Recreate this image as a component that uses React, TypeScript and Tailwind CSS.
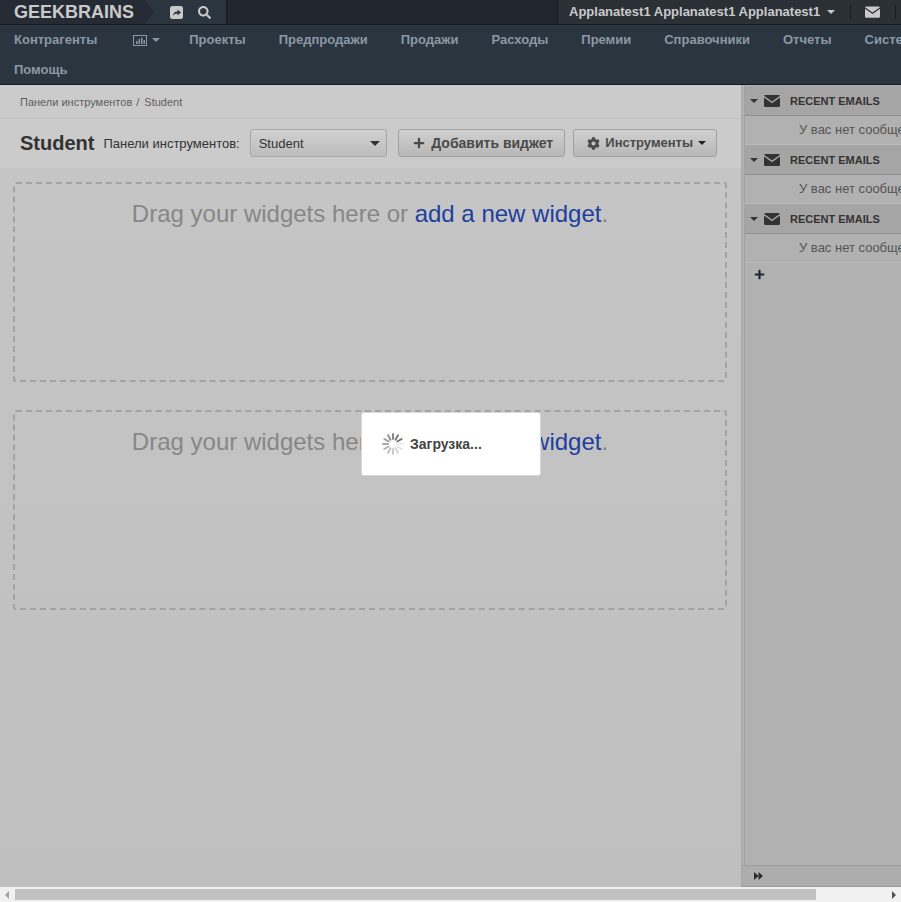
import { FaCog, FaPlus, FaSearch } from 'react-icons/fa';

const navItems = ['Проекты', 'Предпродажи', 'Продажи', 'Расходы', 'Премии', 'Справочники', 'Отчеты', 'Система'];

const Caret = ({ className }: { className: string }) => (
  <span className={`inline-block w-0 h-0 border-x-[4px] border-x-transparent border-t-[4px] ${className}`} />
);

const MailGlyph = ({ className }: { className: string }) => (
  <svg viewBox="0 0 16 12" className={className} fill="currentColor">
    <path d="M1.2 0h13.6c.5 0 1 .3 1.2.8L8 6.6 0 .8C.2.3.7 0 1.2 0z" />
    <path d="M0 2.4v8.4c0 .7.5 1.2 1.2 1.2h13.6c.7 0 1.2-.5 1.2-1.2V2.4L8 8.2z" />
  </svg>
);

const ShareGlyph = () => (
  <svg viewBox="0 0 13 13" className="w-[13px] h-[13px]">
    <rect width="13" height="13" rx="2.5" fill="#c9c9c9" />
    <path d="M3 10c0-3 1.600-4.500 4.500-4.500V3.500L11 6.500 7.500 9.500V7.500C5.500 7.500 4 8.200 3 10z" fill="#2b3540" />
  </svg>
);

const ChartGlyph = () => (
  <svg viewBox="0 0 14 11" className="w-[14px] h-[11px]">
    <rect x="0.500" y="0.500" width="13" height="10" fill="none" stroke="#8b98a3" />
    <path d="M3 6h1.500v3H3zM5.500 4H7v5H5.500zM8 2.500h1.500V9H8zM10.500 5H12v4h-1.500z" fill="#8b98a3" />
  </svg>
);

const FastForwardGlyph = () => (
  <svg viewBox="0 0 9 8" className="w-[9px] h-[8px] text-[#2a2a2a]" fill="currentColor">
    <path d="M0 0l4.500 4L0 8zM4.500 0L9 4 4.500 8z" />
  </svg>
);

const DropZone = () => (
  <div className="h-[200px] border-2 border-dashed border-[#a3a3a3] rounded-[3px] text-center pt-[14px] text-[24px] leading-[32px] text-[#878787]">
    Drag your widgets here or <span className="text-[#1f3e9e]">add a new widget</span>.
  </div>
);

const EmailDashlet = () => (
  <div>
    <div className="h-[30px] bg-[#a5a5a5] border-b border-[#8f8f8f] flex items-center pl-[5px] pt-[1px] text-[#333]">
      <Caret className="border-t-[#333] mr-[6px]" />
      <MailGlyph className="w-4 h-3 mr-[10px]" />
      <span className="text-[11px] font-bold whitespace-nowrap">RECENT EMAILS</span>
    </div>
    <div className="h-[29px] bg-[#b1b1b1] border-b border-[#bcbcbc] pl-[54px] text-[13px] leading-[28px] text-[#555] whitespace-nowrap">
      У вас нет сообщений
    </div>
  </div>
);

export default function App() {
  return (
    <div className="w-[901px] h-[902px] overflow-hidden relative flex flex-col font-['Liberation_Sans',sans-serif] bg-[#f1f1f1]">
      <div className="h-[25px] shrink-0 flex bg-[#22262f] border-b border-[#181c22]">
        <div className="relative w-[145px] bg-[#252b34] pl-[14px] text-[18px] leading-[24px] font-bold text-[#c9c9c9]">
          GEEKBRAINS
          <span className="absolute z-10 left-[145px] top-0 w-0 h-0 border-y-[12px] border-y-transparent border-l-[9px] border-l-[#252b34]" />
        </div>
        <div className="w-[82px] bg-[#2b3540] border-r border-[#181c22] flex items-center pl-[25px] gap-[15px] text-[#c9c9c9]">
          <ShareGlyph />
          <FaSearch className="w-[13px] h-[13px]" />
        </div>
        <div className="flex-1" />
        <div className="w-[344px] border-l border-[#181c22] bg-[#2b3037] flex items-center pl-[11px] text-[13px] font-bold text-[#c9c9c9] whitespace-nowrap">
          Applanatest1 Applanatest1 Applanatest1
          <Caret className="border-t-[#c9c9c9] ml-[7px]" />
          <span className="h-[14px] border-l border-[#181c22] ml-[15px]" />
          <MailGlyph className="w-[15px] h-[12px] ml-[14px] shrink-0" />
          <span className="h-[14px] border-l border-[#181c22] ml-[15px]" />
        </div>
      </div>

      <div className="h-[60px] shrink-0 bg-[#2b3540] border-b border-[#14181d] text-[13px] font-bold text-[#8b98a3] whitespace-nowrap overflow-hidden">
        <div className="h-[30px] flex items-center pl-[14px]">
          <span>Контрагенты</span>
          <span className="flex items-center ml-[36px] mr-[29px]">
            <ChartGlyph />
            <Caret className="border-t-[#8b98a3] ml-[5px] border-x-[3px] border-t-[3px]" />
          </span>
          <div className="flex gap-[33px]">
            {navItems.map(item => (
              <span key={item}>{item}</span>
            ))}
          </div>
        </div>
        <div className="h-[29px] flex items-center pl-[14px]">Помощь</div>
      </div>

      <div className="h-[802px] shrink-0 flex bg-[#bfbfbf]">
        <div className="w-[741px] flex flex-col bg-gradient-to-b from-[#c6c6c6] to-[#bfbfbf]">
          <div className="h-[34px] bg-[#cbcbcb] border-b border-[#c0c0c0] pl-5 text-[11px] leading-[34px] text-[#5f5f5f]">
            Панели инструментов<span className="ml-[4px] mr-[5px]">/</span>Student
          </div>
          <div className="h-[49px] bg-[#cbcbcb] flex items-center pl-5 pb-px">
            <span className="text-[20px] font-bold text-[#333] mr-[9px]">Student</span>
            <span className="text-[13px] text-[#333] mr-[10px] pt-px">Панели инструментов:</span>
            <div className="w-[137px] h-[28px] mr-[11px] border border-[#a8a8a8] rounded-[3px] bg-gradient-to-b from-[#d0d0d0] to-[#bdbdbd] flex items-center justify-between pl-2 pr-[6px] pt-px text-[13px] text-[#333]">
              Student
              <Caret className="border-t-[#333] border-x-[5px] border-t-[5px]" />
            </div>
            <div className="w-[167px] h-[28px] mr-2 border border-[#a0a0a0] rounded-[3px] bg-gradient-to-b from-[#d0d0d0] to-[#b8b8b8] flex items-center justify-center gap-[6px] pl-[4px] text-[14px] font-bold text-[#4a4a4a]">
              <FaPlus className="w-[12px] h-[12px]" />
              Добавить виджет
            </div>
            <div className="w-[144px] h-[28px] border border-[#a0a0a0] rounded-[3px] bg-gradient-to-b from-[#d0d0d0] to-[#b8b8b8] flex items-center justify-center gap-[5px] pl-[4px] text-[13px] font-bold text-[#4a4a4a]">
              <FaCog className="w-[13px] h-[13px]" />
              Инструменты
              <Caret className="border-t-[#222]" />
            </div>
          </div>
          <div className="flex flex-col gap-[28px] pt-[14px] pl-[13px] pr-[14px]">
            <DropZone />
            <DropZone />
          </div>
        </div>

        <div className="flex-1 min-w-0 flex flex-col overflow-hidden border-l border-[#a8a8a8] bg-[#b1b1b1]">
          <div className="flex-1 ml-[2px] border-l border-[#a3a3a3] pt-px">
            <EmailDashlet />
            <EmailDashlet />
            <EmailDashlet />
            <FaPlus className="w-[11px] h-[11px] mt-[6px] ml-[9px] text-[#1c2530]" />
          </div>
          <div className="h-[22px] shrink-0 border-t border-[#9b9b9b] bg-[#adadad] border-b flex items-center pl-[12px]">
            <FastForwardGlyph />
          </div>
        </div>
      </div>

      <div className="h-[15px] shrink-0 flex items-center bg-[#f1f1f1] relative">
        <span className="ml-[5px] w-0 h-0 border-y-[4px] border-y-transparent border-r-[4px] border-r-[#a3a3a3]" />
        <div className="ml-[6px] w-[801px] h-[11px] bg-[#c1c1c1]" />
        <span className="ml-auto mr-[5px] w-0 h-0 border-y-[4px] border-y-transparent border-l-[4px] border-l-[#505050]" />
      </div>

      <div className="absolute left-[361px] top-[412px] w-[180px] h-[64px] bg-white rounded-[3px] border border-[#d8d8d8] flex items-center pl-[19px]">
        <svg viewBox="0 0 24 24" className="w-[24px] h-[24px] mr-[5px]" strokeWidth="2" strokeLinecap="round">
          {[90, 120, 150, 180, 210, 240, 270, 300, 330, 360, 390, 420].map((a, i) => (
            <line key={a} x1="12" y1="2" x2="12" y2="7" stroke={`rgb(${235 - i * 11},${235 - i * 11},${235 - i * 11})`} transform={`rotate(${a} 12 12)`} />
          ))}
        </svg>
        <span className="text-[14px] font-bold text-[#444]">Загрузка...</span>
      </div>
    </div>
  );
}
